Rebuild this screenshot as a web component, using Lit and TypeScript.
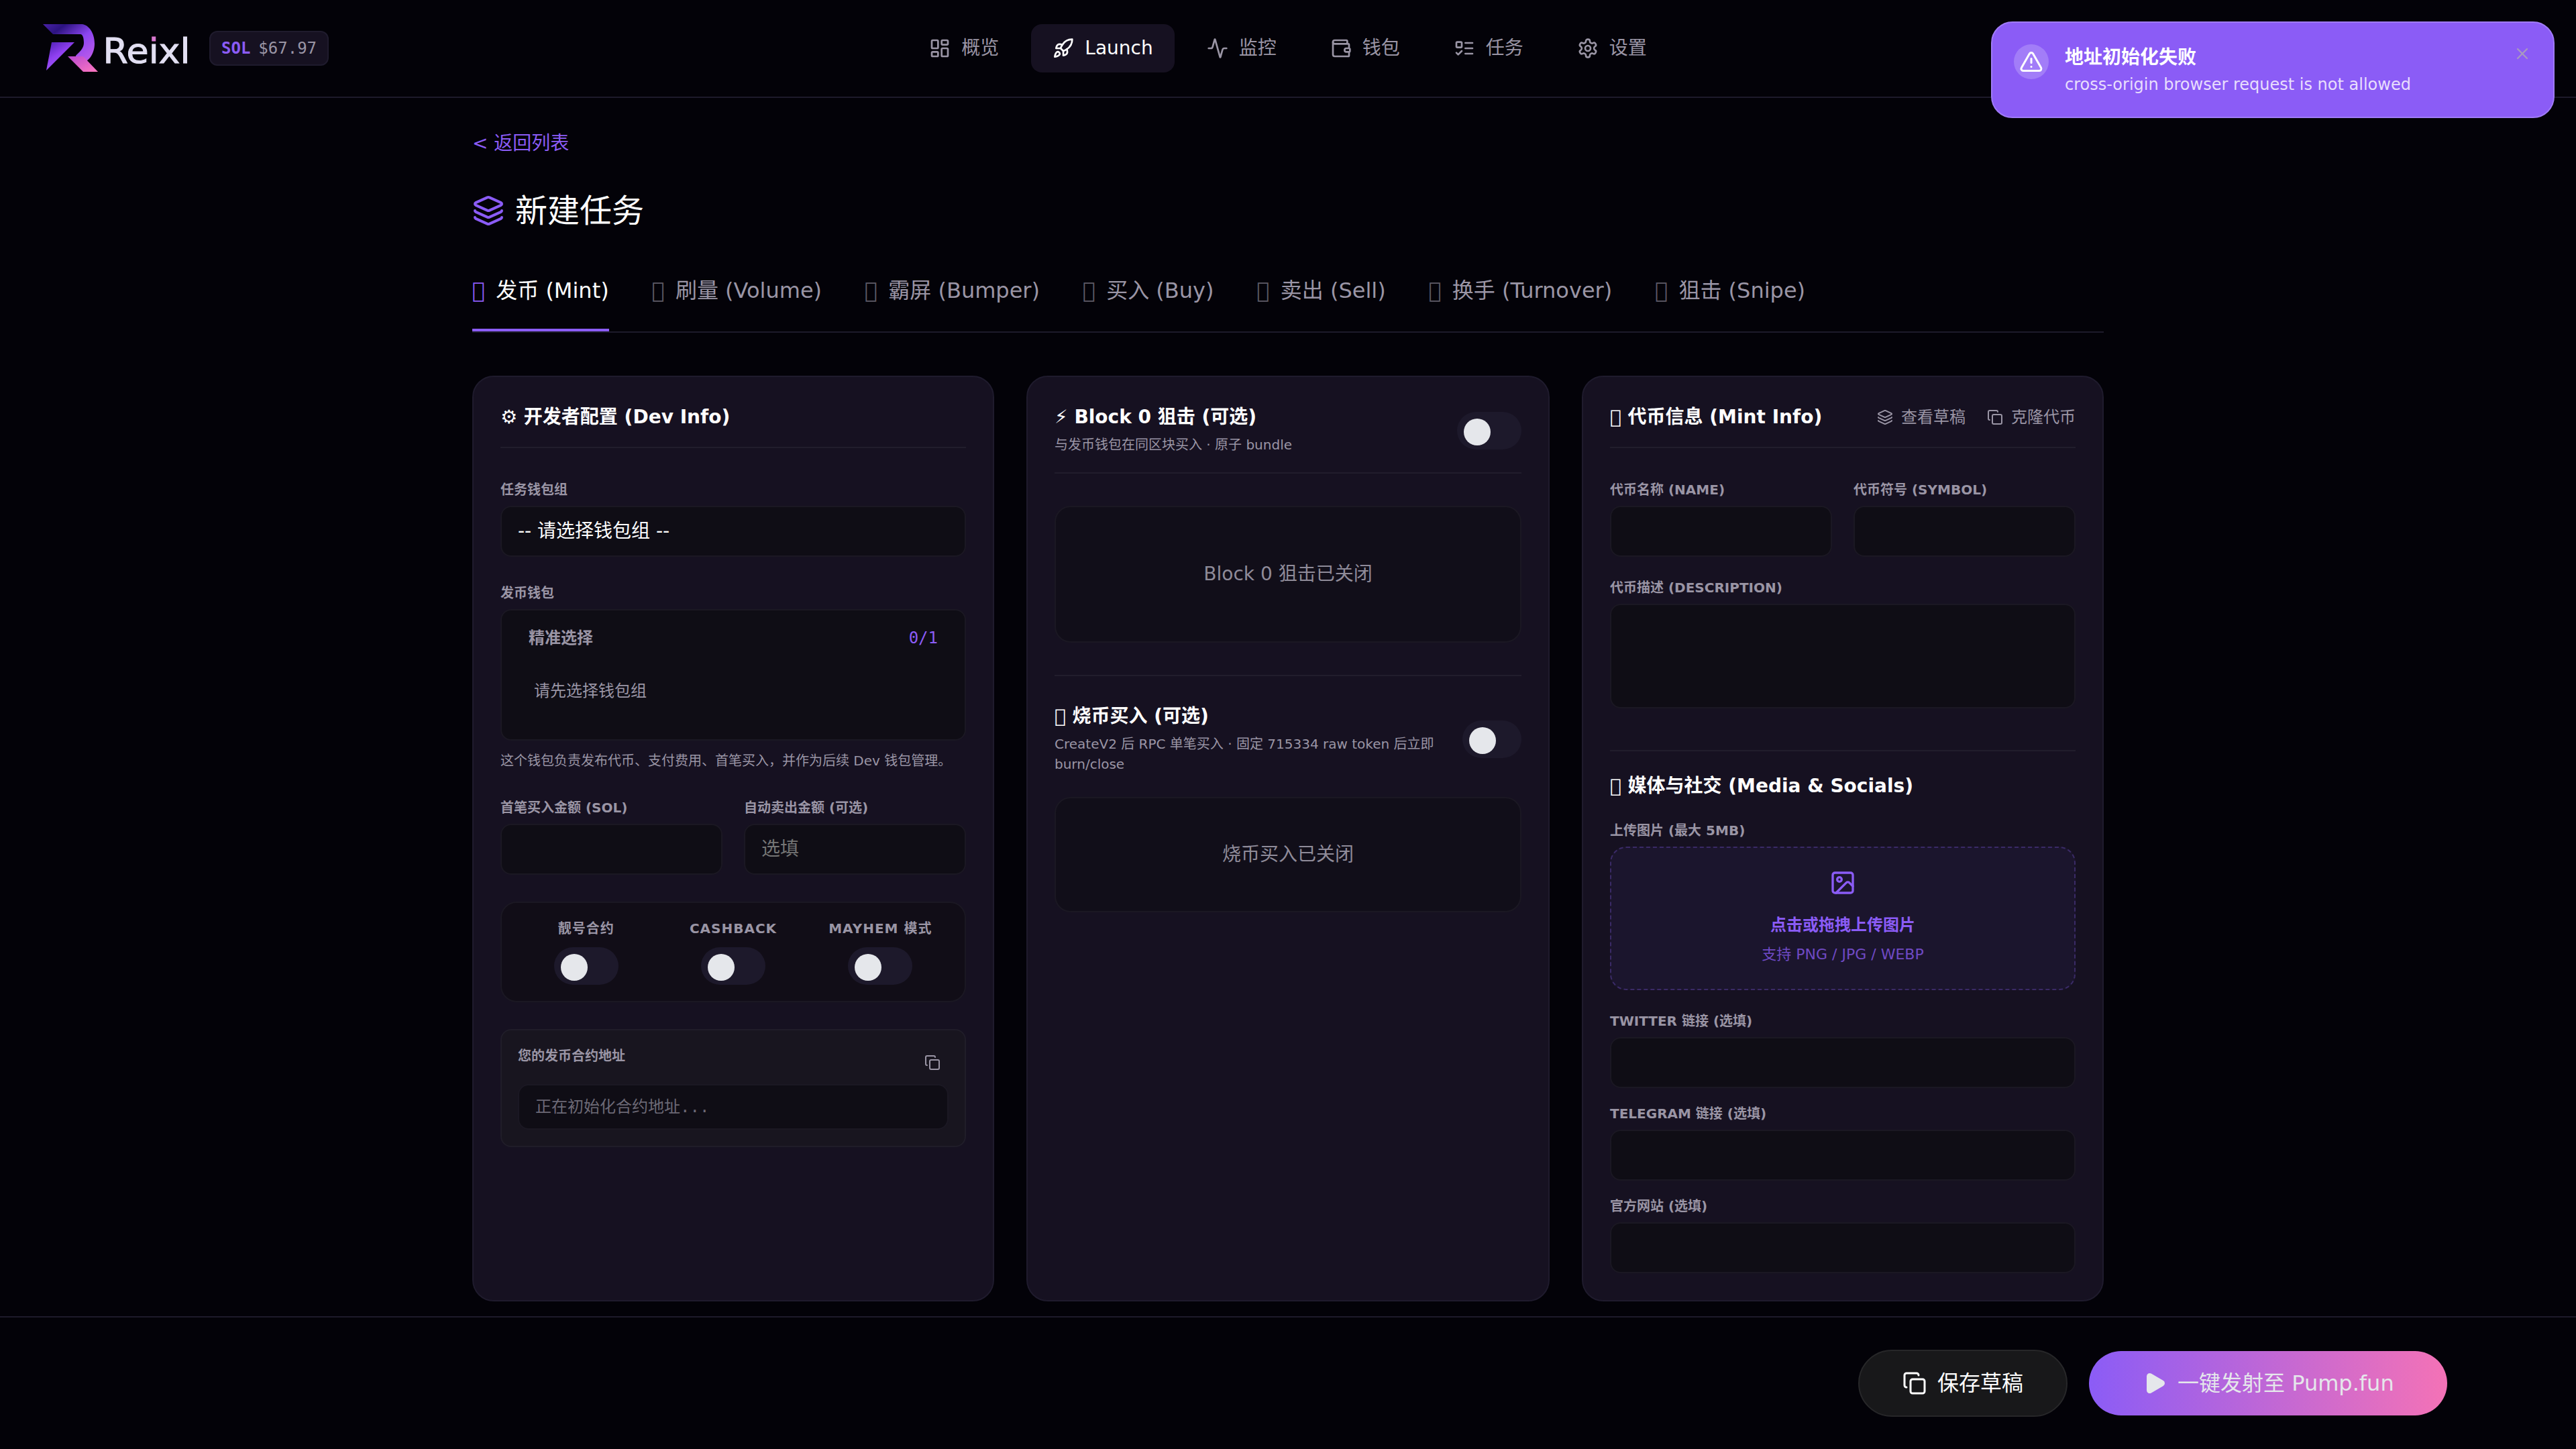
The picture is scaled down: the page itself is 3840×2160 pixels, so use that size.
import { LitElement, css, html, svg } from "lit";
import { customElement, property } from "lit/decorators.js";
import { classMap } from "lit/directives/class-map.js";

const icons = {
  dashboard: svg`<rect x="3" y="3" width="7" height="9" rx="1"/><rect x="14" y="3" width="7" height="5" rx="1"/><rect x="14" y="12" width="7" height="9" rx="1"/><rect x="3" y="16" width="7" height="5" rx="1"/>`,
  rocket: svg`<path d="M4.5 16.5c-1.5 1.26-2 5-2 5s3.74-.5 5-2c.71-.84.7-2.13-.09-2.91a2.18 2.18 0 0 0-2.91-.09z"/><path d="m12 15-3-3a22 22 0 0 1 2-3.95A12.88 12.88 0 0 1 22 2c0 2.72-.78 7.5-6 11a22.35 22.35 0 0 1-4 2z"/><path d="M9 12H4s.55-3.03 2-4c1.62-1.08 5 0 5 0"/><path d="M12 15v5s3.03-.55 4-2c1.08-1.62 0-5 0-5"/>`,
  activity: svg`<path d="M22 12h-2.48a2 2 0 0 0-1.93 1.46l-2.35 8.36a.25.25 0 0 1-.48 0L9.24 2.18a.25.25 0 0 0-.48 0l-2.35 8.36A2 2 0 0 1 4.49 12H2"/>`,
  wallet: svg`<path d="M19 7V4a1 1 0 0 0-1-1H5a2 2 0 0 0 0 4h15a1 1 0 0 1 1 1v4h-3a2 2 0 0 0 0 4h3a1 1 0 0 0 1-1v-2a1 1 0 0 0-1-1"/><path d="M3 5v14a2 2 0 0 0 2 2h15a1 1 0 0 0 1-1v-4"/>`,
  todo: svg`<rect x="3" y="5" width="6" height="6" rx="1"/><path d="m3 17 2 2 4-4"/><path d="M13 6h8"/><path d="M13 12h8"/><path d="M13 18h8"/>`,
  settings: svg`<path d="M12.22 2h-.44a2 2 0 0 0-2 2v.18a2 2 0 0 1-1 1.73l-.43.25a2 2 0 0 1-2 0l-.15-.08a2 2 0 0 0-2.73.73l-.22.38a2 2 0 0 0 .73 2.73l.15.1a2 2 0 0 1 1 1.72v.51a2 2 0 0 1-1 1.74l-.15.09a2 2 0 0 0-.73 2.73l.22.38a2 2 0 0 0 2.73.73l.15-.08a2 2 0 0 1 2 0l.43.25a2 2 0 0 1 1 1.73V20a2 2 0 0 0 2 2h.44a2 2 0 0 0 2-2v-.18a2 2 0 0 1 1-1.73l.43-.25a2 2 0 0 1 2 0l.15.08a2 2 0 0 0 2.73-.73l.22-.39a2 2 0 0 0-.73-2.73l-.15-.08a2 2 0 0 1-1-1.74v-.5a2 2 0 0 1 1-1.74l.15-.09a2 2 0 0 0 .73-2.73l-.22-.38a2 2 0 0 0-2.73-.73l-.15.08a2 2 0 0 1-2 0l-.43-.25a2 2 0 0 1-1-1.73V4a2 2 0 0 0-2-2z"/><circle cx="12" cy="12" r="3"/>`,
  layers: svg`<path d="M12.83 2.18a2 2 0 0 0-1.66 0L2.6 6.08a1 1 0 0 0 0 1.83l8.58 3.91a2 2 0 0 0 1.66 0l8.58-3.9a1 1 0 0 0 0-1.83z"/><path d="M2 12a1 1 0 0 0 .58.91l8.6 3.91a2 2 0 0 0 1.65 0l8.58-3.9A1 1 0 0 0 22 12"/><path d="M2 17a1 1 0 0 0 .58.91l8.6 3.91a2 2 0 0 0 1.65 0l8.58-3.9A1 1 0 0 0 22 17"/>`,
  copy: svg`<rect x="8" y="8" width="14" height="14" rx="2"/><path d="M4 16c-1.1 0-2-.9-2-2V4c0-1.1.9-2 2-2h10c1.1 0 2 .9 2 2"/>`,
  image: svg`<rect x="3" y="3" width="18" height="18" rx="2"/><circle cx="9" cy="9" r="2"/><path d="m21 15-3.086-3.086a2 2 0 0 0-2.828 0L6 21"/>`,
  alert: svg`<path d="m21.73 18-8-14a2 2 0 0 0-3.48 0l-8 14A2 2 0 0 0 4 21h16a2 2 0 0 0 1.73-3"/><path d="M12 9v4"/><path d="M12 17h.01"/>`,
  close: svg`<path d="M18 6 6 18"/><path d="m6 6 12 12"/>`,
  play: svg`<path fill="currentColor" d="M5 5a2 2 0 0 1 3.008-1.728l11.997 6.998a2 2 0 0 1 .003 3.458l-12 7A2 2 0 0 1 5 19z"/>`,
};

type IconName = keyof typeof icons;

// private-use code point, drawn as the font's empty box
const glyph = "\uE8F0";

@customElement("ui-icon")
export class UiIcon extends LitElement {
  @property() name: IconName = "copy";

  static styles = css`
    :host {
      display: block;
      flex: none;
      width: 32px;
      height: 32px;
    }
    .icon {
      display: block;
      width: 100%;
      height: 100%;
      fill: none;
      stroke: currentColor;
      stroke-width: 2;
      stroke-linecap: round;
      stroke-linejoin: round;
    }
  `;

  override render() {
    return html`<svg class="icon" viewBox="0 0 24 24">
      ${icons[this.name]}
    </svg>`;
  }
}

@customElement("ui-toggle")
export class UiToggle extends LitElement {
  static styles = css`
    :host {
      display: block;
      flex: none;
      box-sizing: border-box;
      width: 96px;
      height: 56px;
      padding: 10px;
      border-radius: 28px;
      background: #1d192b;
    }
    .knob {
      width: 40px;
      height: 40px;
      border-radius: 50%;
      background: #e5e7eb;
    }
  `;

  override render() {
    return html`<div class="knob"></div>`;
  }
}

const navItems: { icon: IconName; label: string; active?: boolean }[] = [
  { icon: "dashboard", label: "概览" },
  { icon: "rocket", label: "Launch", active: true },
  { icon: "activity", label: "监控" },
  { icon: "wallet", label: "钱包" },
  { icon: "todo", label: "任务" },
  { icon: "settings", label: "设置" },
];

const tabs = [
  { label: "发币 (Mint)", active: true },
  { label: "刷量 (Volume)" },
  { label: "霸屏 (Bumper)" },
  { label: "买入 (Buy)" },
  { label: "卖出 (Sell)" },
  { label: "换手 (Turnover)" },
  { label: "狙击 (Snipe)" },
];

@customElement("app-root")
export default class AppRoot extends LitElement {
  static styles = css`
    :host {
      display: flex;
      flex-direction: column;
      box-sizing: border-box;
      width: 3840px;
      height: 2160px;
      overflow: hidden;
      background: #030208;
      color: #fff;
      font-family: "DejaVu Sans", "Noto Sans CJK SC", sans-serif;
      font-size: 28px;
      line-height: 40px;
    }
    *,
    *::before {
      box-sizing: border-box;
    }

    .header {
      display: grid;
      grid-template-columns: 1fr auto 1fr;
      align-items: center;
      height: 146px;
      padding: 0 64px;
      border-bottom: 2px solid #1d1a2a;
    }
    .brand {
      display: flex;
      align-items: center;
      gap: 24px;
    }
    .logo {
      display: block;
      width: 224px;
      height: 72px;
    }
    .wordmark {
      font-family: "DejaVu Sans", sans-serif;
      font-size: 51px;
      stroke-width: 1px;
    }
    .price {
      display: flex;
      align-items: center;
      gap: 12px;
      height: 52px;
      padding: 0 16px;
      border: 2px solid #1f1b2d;
      border-radius: 12px;
      background: #161121;
      color: #9a95a5;
      font-family: "DejaVu Sans Mono", monospace;
      font-size: 24px;
    }
    .price-symbol {
      color: #8b5cf6;
      font-weight: 700;
    }
    .nav {
      display: flex;
      gap: 16px;
    }
    .nav-item {
      display: flex;
      align-items: center;
      gap: 16px;
      height: 72px;
      padding: 0 32px;
      border-radius: 16px;
      color: #9a95a5;
    }
    .nav-item.active {
      background: #161121;
      color: #fff;
    }

    .main {
      flex: 1;
      width: 2432px;
      margin: 0 auto;
      padding-top: 48px;
    }
    .back {
      color: #8b5cf6;
    }
    .title {
      display: flex;
      align-items: center;
      gap: 16px;
      margin: 44px 0 0;
      font-size: 48px;
      font-weight: 400;
      line-height: 72px;
    }
    .title-icon {
      width: 48px;
      height: 48px;
      color: #8b5cf6;
    }
    .tabs {
      display: flex;
      gap: 64px;
      height: 112px;
      margin-top: 34px;
      border-bottom: 2px solid #1d1a2a;
      font-size: 32px;
    }
    .tab {
      display: flex;
      gap: 16px;
      height: 110px;
      padding-top: 29px;
      border-bottom: 4px solid transparent;
      color: #9a95a5;
    }
    .tab.active {
      border-color: #8b5cf6;
      color: #fff;
    }
    .tab-icon {
      opacity: 0.6;
    }
    .active .tab-icon {
      opacity: 1;
      color: #8b5cf6;
    }

    .cards {
      display: grid;
      grid-template-columns: 778px 780px 778px;
      gap: 48px;
      height: 1380px;
      margin-top: 64px;
    }
    .card {
      padding: 40px;
      border: 2px solid #1f1b2d;
      border-radius: 32px;
      background: #161121;
    }
    .card-head {
      display: flex;
      align-items: center;
      justify-content: space-between;
      margin-bottom: 48px;
      padding-bottom: 24px;
      border-bottom: 2px solid #211d2c;
    }
    .card-title {
      margin: 0;
      font-size: 28px;
      font-weight: 700;
      line-height: 40px;
    }
    .hint {
      margin: 6px 0 0;
      padding-bottom: 2px;
      color: #9a95a5;
      font-size: 20px;
      line-height: 30px;
    }
    .toggle-head {
      margin-top: 2px;
    }
    .section {
      margin-top: 48px;
      border-top: 2px solid #211d2c;
      padding-top: 40px;
    }
    .section-head {
      display: flex;
      align-items: center;
      justify-content: space-between;
      gap: 32px;
      margin-bottom: 32px;
    }
    .toggle-narrow {
      width: 88px;
    }
    .links {
      display: flex;
      gap: 32px;
      color: #9a95a5;
      font-size: 24px;
    }
    .link {
      display: flex;
      align-items: center;
      gap: 12px;
    }
    .icon-small {
      width: 24px;
      height: 24px;
    }

    .field {
      margin-bottom: 40px;
    }
    .label {
      margin-bottom: 10px;
      color: #9a95a5;
      font-size: 20px;
      font-weight: 700;
      line-height: 28px;
    }
    .input {
      height: 76px;
      padding: 16px 24px;
      border: 2px solid #1b1823;
      border-radius: 16px;
      background: #0f0d15;
    }
    .placeholder {
      color: #757575;
    }
    .pair {
      display: grid;
      grid-template-columns: 1fr 1fr;
      gap: 32px;
    }
    .picker {
      height: 196px;
      padding: 21px 40px;
      border: 2px solid #1b1823;
      border-radius: 16px;
      background: #0f0d15;
      color: #9a95a5;
      font-size: 24px;
    }
    .picker-head {
      display: flex;
      justify-content: space-between;
      margin-bottom: 39px;
      font-weight: 700;
    }
    .count {
      color: #8b5cf6;
      font-family: "DejaVu Sans Mono", monospace;
      font-weight: 400;
    }
    .picker-empty {
      padding-left: 8px;
    }
    .note {
      margin-top: 14px;
      color: #9a95a5;
      font-size: 20px;
      line-height: 32px;
      white-space: nowrap;
    }
    .options {
      display: grid;
      grid-template-columns: repeat(3, 1fr);
      gap: 16px;
      height: 150px;
      margin-bottom: 40px;
      padding: 24px;
      border: 2px solid #1b1823;
      border-radius: 24px;
      background: #110d17;
    }
    .option {
      display: flex;
      flex-direction: column;
      align-items: center;
      gap: 14px;
      color: #9a95a5;
      font-size: 20px;
      font-weight: 700;
      line-height: 28px;
      letter-spacing: 1px;
      white-space: nowrap;
    }
    .address {
      height: 176px;
      padding: 24px;
      border: 2px solid #201d29;
      border-radius: 16px;
      background: #18151f;
    }
    .address-head {
      display: flex;
      justify-content: space-between;
      height: 56px;
    }
    .address-copy {
      width: 24px;
      height: 24px;
      margin: 12px 12px 0 0;
      color: #9a95a5;
    }
    .address-input {
      height: 68px;
      padding: 12px 24px;
      color: #6c6976;
      font-family: "DejaVu Sans Mono", "Noto Sans CJK SC", monospace;
      font-size: 24px;
    }

    .empty {
      display: flex;
      align-items: center;
      justify-content: center;
      height: 204px;
      border: 2px solid #1b1823;
      border-radius: 24px;
      background: #110e19;
      color: #8f8b99;
    }
    .empty.short {
      height: 172px;
    }

    .token-pair {
      margin-bottom: 32px;
    }
    .textarea {
      height: 156px;
    }
    .media {
      margin-top: 62px;
      padding-top: 32px;
    }
    .media-title {
      margin-bottom: 32px;
    }
    .upload {
      display: flex;
      flex-direction: column;
      align-items: center;
      height: 214px;
      margin-bottom: 32px;
      padding-top: 32px;
      border: 2px dashed #3a2a66;
      border-radius: 24px;
      background: #1b152d;
      color: #8b5cf6;
      font-size: 24px;
      font-weight: 700;
    }
    .upload-icon {
      width: 40px;
      height: 40px;
      margin-bottom: 23px;
    }
    .upload-hint {
      margin-top: 4px;
      font-size: 22px;
      font-weight: 400;
      opacity: 0.75;
    }
    .social + .social {
      margin-top: 24px;
    }

    .footer {
      display: flex;
      align-items: center;
      justify-content: flex-end;
      gap: 32px;
      flex: none;
      height: 198px;
      padding-right: 192px;
      border-top: 2px solid #1d1a2a;
      font-size: 32px;
    }
    .button {
      display: flex;
      align-items: center;
      gap: 16px;
      height: 100px;
      padding: 0 64px;
      border: 2px solid #272729;
      border-radius: 50px;
      background: #18181a;
    }
    .button.primary {
      width: 534px;
      height: 96px;
      padding: 0 0 0 80px;
      border: none;
      background: linear-gradient(90deg, #8b5cf6, #f472b6);
      color: #e5e7eb;
    }
    .button-icon {
      width: 36px;
      height: 36px;
    }

    .toast {
      position: absolute;
      top: 32px;
      left: 2968px;
      display: flex;
      gap: 24px;
      width: 840px;
      height: 144px;
      padding: 32px;
      border: 2px solid #a07bf8;
      border-radius: 32px;
      background: #8b5cf6;
    }
    .toast-badge {
      display: flex;
      align-items: center;
      justify-content: center;
      width: 52px;
      height: 52px;
      border-radius: 50%;
      background: #a27df8;
    }
    .toast-icon {
      width: 36px;
      height: 36px;
    }
    .toast-body {
      flex: 1;
    }
    .toast-title {
      font-weight: 700;
    }
    .toast-text {
      color: #e8defd;
      font-size: 24px;
    }
    .toast-close {
      width: 28px;
      height: 28px;
      color: #a898c0;
    }
  `;

  override render() {
    return html`
      <header class="header">
        <div class="brand">
          ${this.#logo()}
          <div class="price"><span class="price-symbol">SOL</span>$67.97</div>
        </div>
        <nav class="nav">
          ${navItems.map(
            (item) => html`<div
              class=${classMap({ "nav-item": true, active: !!item.active })}
            >
              <ui-icon name=${item.icon}></ui-icon>${item.label}
            </div>`
          )}
        </nav>
      </header>
      <main class="main">
        <div class="back">&lt; 返回列表</div>
        <h1 class="title">
          <ui-icon class="title-icon" name="layers"></ui-icon>新建任务
        </h1>
        <div class="tabs">
          ${tabs.map(
            (tab) => html`<div
              class=${classMap({ tab: true, active: !!tab.active })}
            >
              <span class="tab-icon">${glyph}</span>${tab.label}
            </div>`
          )}
        </div>
        <div class="cards">
          ${this.#devCard()} ${this.#snipeCard()} ${this.#mintCard()}
        </div>
      </main>
      <footer class="footer">
        <div class="button">
          <ui-icon class="button-icon" name="copy"></ui-icon>保存草稿
        </div>
        <div class="button primary">
          <ui-icon class="button-icon" name="play"></ui-icon>一键发射至 Pump.fun
        </div>
      </footer>
      <div class="toast">
        <div class="toast-badge">
          <ui-icon class="toast-icon" name="alert"></ui-icon>
        </div>
        <div class="toast-body">
          <div class="toast-title">地址初始化失败</div>
          <div class="toast-text">
            cross-origin browser request is not allowed
          </div>
        </div>
        <ui-icon class="toast-close" name="close"></ui-icon>
      </div>
    `;
  }

  #logo() {
    return html`<svg class="logo" viewBox="0 0 224 72">
      <defs>
        <linearGradient id="bowl" x1="0" y1="0" x2="1" y2="1">
          <stop offset="0" stop-color="#4a22a8" />
          <stop offset="0.22" stop-color="#2c1380" />
          <stop offset="0.55" stop-color="#8b45f0" />
          <stop offset="1" stop-color="#c860e8" />
        </linearGradient>
        <linearGradient id="stem" x1="0" y1="0" x2="0.6" y2="1">
          <stop offset="0" stop-color="#4a1fb0" />
          <stop offset="0.5" stop-color="#9040f0" />
          <stop offset="1" stop-color="#a060f8" />
        </linearGradient>
        <linearGradient id="leg" x1="0" y1="0" x2="1" y2="1">
          <stop offset="0" stop-color="#b848d0" />
          <stop offset="1" stop-color="#ff78c0" />
        </linearGradient>
        <linearGradient
          id="dot"
          gradientUnits="userSpaceOnUse"
          x1="0"
          y1="18"
          x2="0"
          y2="58"
        >
          <stop offset="0.22" stop-color="#d978d0" />
          <stop offset="0.22" stop-color="#e2dff2" />
        </linearGradient>
      </defs>
      <path
        fill="url(#bowl)"
        d="M0 0H58C69 1 77 14 77 29C77 44 68 58 55 58L49 50V47C54 42 61 36 61 28C61 20 59 15 56 15H15Z"
      />
      <path fill="url(#stem)" d="M13 27H47L5 69Z" />
      <path fill="url(#leg)" d="M37 48H60L82 71H60Z" />
      <text
        class="wordmark"
        x="89.5"
        y="58"
        textLength="130"
        lengthAdjust="spacingAndGlyphs"
        fill="#e2dff2"
        stroke="#e2dff2"
      >Re<tspan fill="url(#dot)" stroke="url(#dot)">i</tspan>xl</text>
    </svg>`;
  }

  #field(label: string, value = "") {
    return html`<div class="label">${label}</div>
      <div class="input placeholder">${value}</div>`;
  }

  #devCard() {
    return html`<section class="card">
      <div class="card-head">
        <h2 class="card-title">⚙ 开发者配置 (Dev Info)</h2>
      </div>
      <div class="field">
        <div class="label">任务钱包组</div>
        <div class="input">-- 请选择钱包组 --</div>
      </div>
      <div class="field">
        <div class="label">发币钱包</div>
        <div class="picker">
          <div class="picker-head">
            精准选择<span class="count">0/1</span>
          </div>
          <div class="picker-empty">请先选择钱包组</div>
        </div>
        <div class="note">
          这个钱包负责发布代币、支付费用、首笔买入，并作为后续 Dev 钱包管理。
        </div>
      </div>
      <div class="field pair">
        <div>${this.#field("首笔买入金额 (SOL)")}</div>
        <div>${this.#field("自动卖出金额 (可选)", "选填")}</div>
      </div>
      <div class="options">
        ${["靓号合约", "CASHBACK", "MAYHEM 模式"].map(
          (name) => html`<div class="option">
            ${name}<ui-toggle></ui-toggle>
          </div>`
        )}
      </div>
      <div class="address">
        <div class="address-head">
          <div class="label">您的发币合约地址</div>
          <ui-icon class="address-copy" name="copy"></ui-icon>
        </div>
        <div class="input address-input">正在初始化合约地址...</div>
      </div>
    </section>`;
  }

  #snipeCard() {
    return html`<section class="card">
      <div class="card-head">
        <div>
          <h2 class="card-title">⚡ Block 0 狙击 (可选)</h2>
          <p class="hint">与发币钱包在同区块买入 · 原子 bundle</p>
        </div>
        <ui-toggle class="toggle-head"></ui-toggle>
      </div>
      <div class="empty">Block 0 狙击已关闭</div>
      <div class="section">
        <div class="section-head">
          <div>
            <h2 class="card-title">${glyph} 烧币买入 (可选)</h2>
            <p class="hint">
              CreateV2 后 RPC 单笔买入 · 固定 715334 raw token 后立即 burn/close
            </p>
          </div>
          <ui-toggle class="toggle-narrow"></ui-toggle>
        </div>
        <div class="empty short">烧币买入已关闭</div>
      </div>
    </section>`;
  }

  #mintCard() {
    return html`<section class="card">
      <div class="card-head">
        <h2 class="card-title">${glyph} 代币信息 (Mint Info)</h2>
        <div class="links">
          <div class="link">
            <ui-icon class="icon-small" name="layers"></ui-icon>查看草稿
          </div>
          <div class="link">
            <ui-icon class="icon-small" name="copy"></ui-icon>克隆代币
          </div>
        </div>
      </div>
      <div class="pair token-pair">
        <div>${this.#field("代币名称 (NAME)")}</div>
        <div>${this.#field("代币符号 (SYMBOL)")}</div>
      </div>
      <div class="label">代币描述 (DESCRIPTION)</div>
      <div class="input textarea"></div>
      <div class="section media">
        <h2 class="card-title media-title">${glyph} 媒体与社交 (Media &amp; Socials)</h2>
        <div class="label">上传图片 (最大 5MB)</div>
        <div class="upload">
          <ui-icon class="upload-icon" name="image"></ui-icon>
          <div>点击或拖拽上传图片</div>
          <div class="upload-hint">支持 PNG / JPG / WEBP</div>
        </div>
        ${["TWITTER 链接 (选填)", "TELEGRAM 链接 (选填)", "官方网站 (选填)"].map(
          (label) => html`<div class="social">${this.#field(label)}</div>`
        )}
      </div>
    </section>`;
  }
}
